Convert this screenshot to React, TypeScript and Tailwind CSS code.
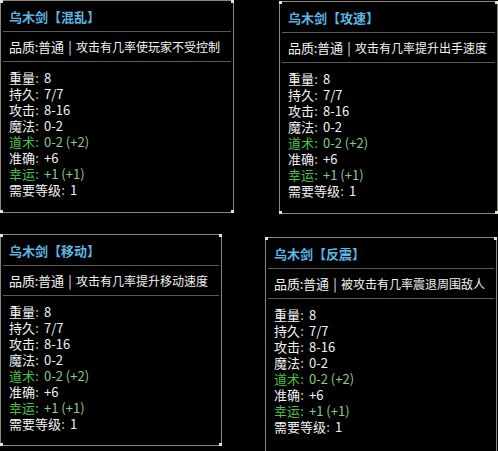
import React from "react";

type Stat = { label: string; value: string; green?: boolean };

const stats: Stat[] = [
  { label: "重量", value: "8" },
  { label: "持久", value: "7/7" },
  { label: "攻击", value: "8-16" },
  { label: "魔法", value: "0-2" },
  { label: "道术", value: "0-2 (+2)", green: true },
  { label: "准确", value: "+6" },
  { label: "幸运", value: "+1 (+1)", green: true },
  { label: "需要等级", value: "1" },
];

function Corner({ pos }: { pos: string }) {
  return <span className={`absolute w-[3px] h-[3px] bg-[#e8e4d0] ${pos}`} />;
}

function ItemTip({
  name,
  effect,
  className,
}: {
  name: string;
  effect: string;
  className: string;
}) {
  return (
    <div className={`relative bg-black border border-[#8a877c] ${className}`}>
      <Corner pos="-left-[1px] -top-[1px]" />
      <Corner pos="-right-[1px] -top-[1px]" />
      <Corner pos="-left-[1px] -bottom-[1px]" />
      <Corner pos="-right-[1px] -bottom-[1px]" />
      <div className="px-[8px] pt-[8px] pb-[6px] font-bold text-[#5cb6e2]">
        乌木剑【{name}】
      </div>
      <div className="mx-[2px] h-px bg-[#5a5a56]" />
      <div className="flex items-center px-[8px] pt-[7px] pb-[6px] text-[#f2f2f2]">
        <span className="shrink-0">品质</span>
        <span className="shrink-0 w-[3px] flex justify-center">:</span>
        <span className="shrink-0">普通</span>
        <span className="shrink-0 w-[12px] flex justify-center">|</span>
        <span className="shrink-0 text-[12px]">{effect}</span>
      </div>
      <div className="mx-[2px] h-px bg-[#5a5a56]" />
      <div className="px-[8px] pt-[8px] flex flex-col">
        {stats.map((s) => (
          <div key={s.label} className="flex">
            <span className={s.green ? "text-[#46c046]" : "text-[#f2f2f2]"}>{s.label}</span>
            <span className={`w-[4px] flex justify-center ${s.green ? "text-[#46c046]" : "text-[#c8c8c8]"}`}>:</span>
            <span className={`ml-[5px] ${s.green ? "text-[#8ccb8c]" : "text-[#f2f2f2]"}`}>{s.value}</span>
          </div>
        ))}
      </div>
    </div>
  );
}

export default function App() {
  return (
    <div className="w-[498px] h-[451px] overflow-hidden bg-black font-['Noto_Sans_CJK_SC',sans-serif] text-[13px] leading-[16px] whitespace-nowrap">
      <div className="flex items-start">
        <ItemTip name="混乱" effect="攻击有几率使玩家不受控制" className="w-[234px] h-[213px]" />
        <ItemTip name="攻速" effect="攻击有几率提升出手速度" className="ml-[45px] mt-[1px] w-[219px] h-[213px]" />
      </div>
      <div className="flex items-start mt-[20px]">
        <ItemTip name="移动" effect="攻击有几率提升移动速度" className="w-[222px] h-[212px]" />
        <ItemTip name="反震" effect="被攻击有几率震退周围敌人" className="ml-[43px] mt-[3px] w-[232px] h-[230px]" />
      </div>
    </div>
  );
}
